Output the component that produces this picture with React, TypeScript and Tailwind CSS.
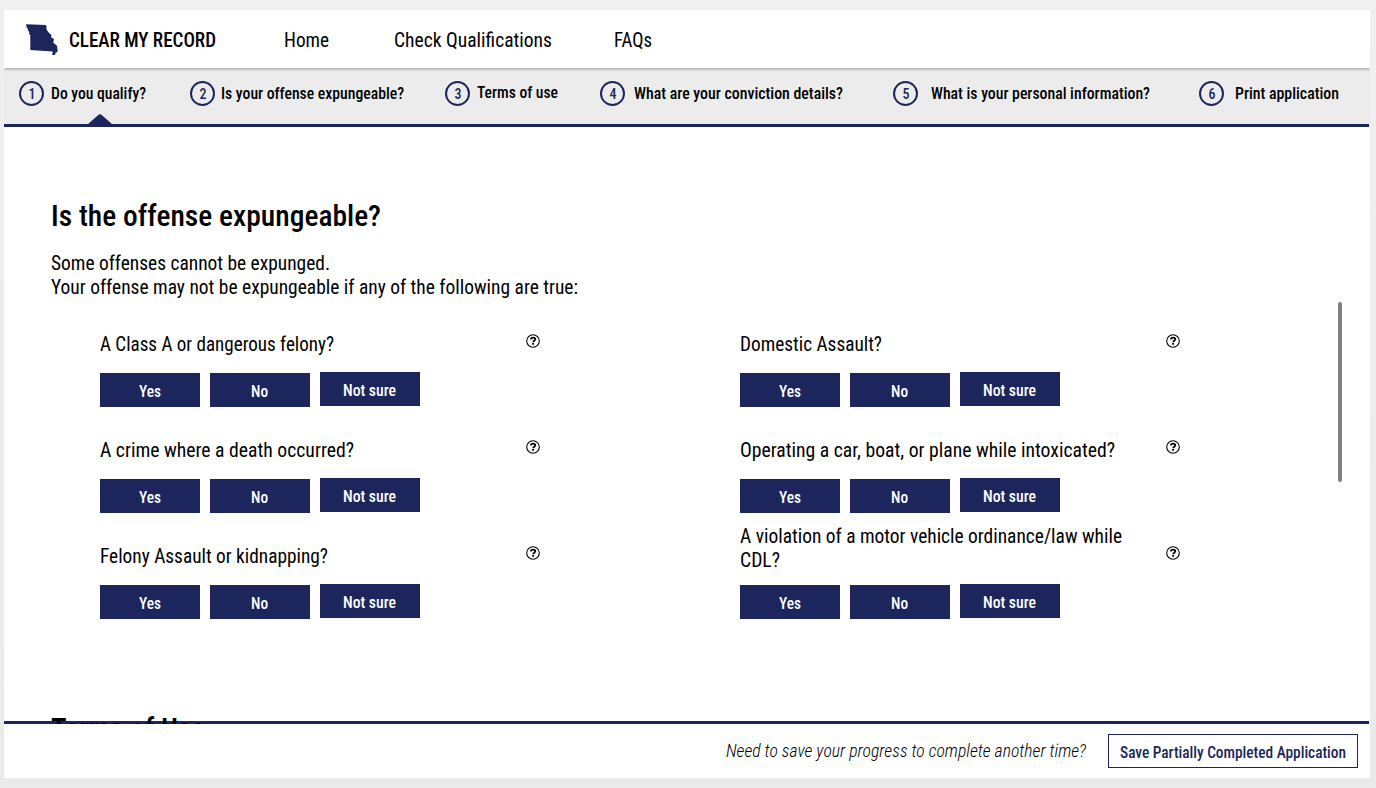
import { useLayoutEffect, useRef, useState } from "react";
import type { ReactNode } from "react";

/* Single line of text, squeezed or stretched to the width of its box. */
function Line({ className, children }: { className: string; children: ReactNode }) {
  const box = useRef<HTMLSpanElement>(null);
  const text = useRef<HTMLSpanElement>(null);
  const [scale, setScale] = useState(1);
  useLayoutEffect(() => {
    if (box.current && text.current) {
      setScale(box.current.clientWidth / text.current.getBoundingClientRect().width);
    }
  }, []);
  return (
    <span ref={box} className={"block shrink-0 whitespace-nowrap " + className}>
      <span ref={text} className="inline-block origin-left" style={{ transform: `scaleX(${scale})` }}>
        {children}
      </span>
    </span>
  );
}

const steps = [
  { label: "Do you qualify?", gap: "ml-[15px]", width: "ml-[7px] w-[94.5px] pt-px" },
  { label: "Is your offense expungeable?", gap: "ml-[44.5px]", width: "ml-[6px] w-[183px] pt-px" },
  { label: "Terms of use", gap: "ml-[41px]", width: "ml-[7px] w-[81px] -mt-px" },
  { label: "What are your conviction details?", gap: "ml-[42px]", width: "ml-[9px] w-[209px] pt-px" },
  { label: "What is your personal information?", gap: "ml-[50px]", width: "ml-[13px] w-[219px] pt-px" },
  { label: "Print application", gap: "ml-[49px]", width: "ml-[11px] w-[103.5px] pt-px" },
];

const columns = [
  [
    { lines: [["A Class A or dangerous felony?", "w-[233.5px]"]] },
    { lines: [["A crime where a death occurred?", "w-[253.5px]"]] },
    { lines: [["Felony Assault or kidnapping?", "w-[228px]"]] },
  ],
  [
    { lines: [["Domestic Assault?", "w-[141.5px]"]] },
    { lines: [["Operating a car, boat, or plane while intoxicated?", "w-[375px]"]] },
    { lines: [["A violation of a motor vehicle ordinance/law while", "w-[382px]"], ["CDL?", "w-[39.5px]"]] },
  ],
];

function HelpIcon() {
  return (
    <svg className="mt-[26px] size-[14px]" viewBox="0 0 14 14" fill="none" stroke="#000">
      <circle cx="7" cy="7" r="6.3" strokeWidth="1.1" />
      <path d="M4.8 5.4C4.9 4.2 5.8 3.6 7 3.6c1.3 0 2.3.6 2.3 1.7 0 1.4-2 1.4-2.1 2.9" strokeWidth="1.8" />
      <path d="M7.1 9v1.8" strokeWidth="1.8" />
    </svg>
  );
}

function Answer({ label, width, raised }: { label: string; width: string; raised?: boolean }) {
  return (
    <button
      className={
        "flex h-[34px] w-[100px] items-center justify-center bg-[#1c265d] pt-[4px] pr-px text-base leading-6 font-medium text-white " +
        (raised ? "-mt-px" : "")
      }
    >
      <Line className={width}>{label}</Line>
    </button>
  );
}

export default function App() {
  return (
    <div className="h-[788px] w-[1376px] overflow-hidden bg-linear-to-b from-[#f0f0f0] to-[#eaeaea] pt-[10px] pl-1 font-['Roboto_Condensed',Roboto,sans-serif] text-black [font-stretch:75%]">
      <div className="flex h-[768px] w-[1366px] flex-col bg-white">
        <header className="z-10 flex h-[58px] shrink-0 items-center bg-white pl-[22px] shadow-[0_1px_3px_rgba(0,0,0,0.35)] [clip-path:inset(0_0_-5px_0)]">
          <svg className="h-[31px] w-[33px]" viewBox="0 0 33 31" fill="#1c265d">
            <path d="M0 .2 19.6 1l1 1.7-.3 2.1 1.8 3.3 3.2 2.9.1 3 1.6.3 1 1-.8 3.2 2.3 2.1 1.6 1.4.2 2.7 .6 1.3-.9 2.2-1.4.3-.4 2-.7 1.2-3 .1 1-1.8.1-2.4L4.3 26V11.2L2.9 9.3l.6-1.4L2.2 7 1.7 4.4.6 3.4Z" />
          </svg>
          <Line className="ml-[10px] w-[147px] pt-[2px] text-xl leading-6 font-medium">CLEAR MY RECORD</Line>
          <nav className="flex pt-px text-xl leading-6">
            <Line className="ml-[68px] w-[45px]">Home</Line>
            <Line className="ml-[65px] w-[158px]">Check Qualifications</Line>
            <Line className="ml-[62px] w-[38px]">FAQs</Line>
          </nav>
        </header>

        <div className="relative h-[59px] shrink-0 bg-[#ececec]">
          <ol className="flex h-[50px] items-center">
            {steps.map((step, i) => (
              <li key={step.label} className={"flex items-center " + step.gap}>
                <span className="flex size-[25px] items-center justify-center rounded-full border-2 border-[#1c265d] pt-[2px] pl-px text-[14px] leading-5 font-medium text-[#1c265d]">
                  {i + 1}
                </span>
                <Line className={"text-base leading-6 font-medium " + step.width}>{step.label}</Line>
              </li>
            ))}
          </ol>
          <svg className="absolute top-[46px] left-[83px] h-[11px] w-[26px]" viewBox="0 0 26 11" fill="#1c265d">
            <path d="M0 11 11 1.2Q13-.6 15 1.2L26 11Z" />
          </svg>
          <div className="mt-[6px] h-[3px] w-[1365px] bg-[#1c265d]" />
        </div>

        <main className="z-10 -mb-[3px] flex h-[597px] shrink-0 overflow-hidden">
          <div className="w-[1334px] shrink-0">
            <div className="pt-[71px] pl-[47px]">
              <h1>
                <Line className="w-[329.5px] text-[29px] leading-9 font-medium">Is the offense expungeable?</Line>
              </h1>
              <div className="mt-[17px] text-xl leading-6">
                <Line className="w-[279px]">Some offenses cannot be expunged.</Line>
                <Line className="w-[527px]">Your offense may not be expungeable if any of the following are true:</Line>
              </div>
            </div>
            <div className="mt-[9px] flex gap-[200px] pl-24">
              {columns.map((questions, c) => (
                <div key={c} className="w-[440px]">
                  {questions.map((q) => (
                    <section key={q.lines[0][0]} className="h-[106px]">
                      <div className="flex h-[65px] justify-between">
                        <div className={"text-xl leading-6 " + (q.lines.length > 1 ? "pt-1" : "pt-6")}>
                          {q.lines.map(([text, width]) => (
                            <Line key={text} className={width}>{text}</Line>
                          ))}
                        </div>
                        <HelpIcon />
                      </div>
                      <div className="flex gap-[10px]">
                        <Answer label="Yes" width="w-[22px]" />
                        <Answer label="No" width="w-[17px]" />
                        <Answer label="Not sure" width="w-[53px]" raised />
                      </div>
                    </section>
                  ))}
                </div>
              ))}
            </div>
            <h2 className="mt-[85px] pl-[47px]">
              <Line className="w-[154px] text-[29px] leading-9 font-medium">Terms of Use</Line>
            </h2>
          </div>
          <div className="mt-[175px] h-[180px] w-1 rounded-full bg-[#808080]" />
        </main>

        <footer className="h-[57px] shrink-0">
          <div className="h-[3px] w-[1365px] bg-[#1c265d]" />
          <div className="flex h-[54px] items-center justify-end pr-3">
            <Line className="mr-[22px] w-[360px] text-lg leading-6 font-light italic">
              Need to save your progress to complete another time?
            </Line>
            <button className="flex h-[34px] w-[250px] items-center justify-center border border-[#1c265d] pt-[3px] text-base leading-6 font-medium text-[#1c265d]">
              <Line className="w-[226px]">Save Partially Completed Application</Line>
            </button>
          </div>
        </footer>
      </div>
    </div>
  );
}
